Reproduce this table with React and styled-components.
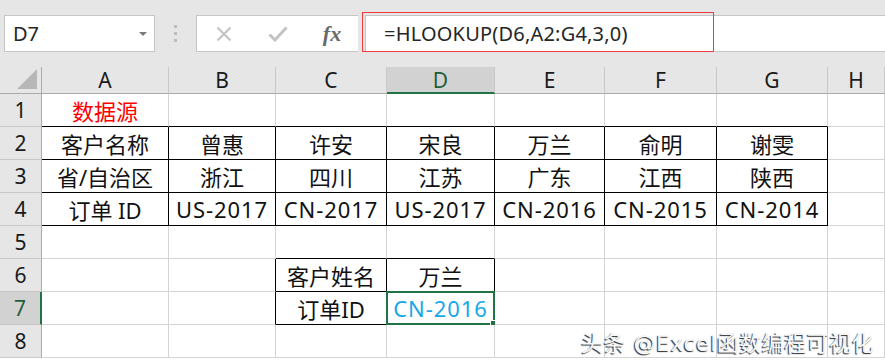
import React from "react";
import styled, { createGlobalStyle } from "styled-components";

const Global = createGlobalStyle`
  html, body { margin: 0; padding: 0; background: #ffffff; overflow: hidden; }
  body { font-family: "Noto Sans", "Noto Sans CJK SC", sans-serif; }
`;

const Page = styled.div`
  position: relative;
  width: 885px;
  height: 362px;
  overflow: hidden;
  background: #ffffff;
`;

const Toolbar = styled.div`
  position: relative;
  display: flex;
  align-items: flex-start;
  height: 67px;
  box-sizing: border-box;
  padding: 15px 0 0 4px;
  background: #e6e6e6;
`;

const NameBox = styled.div`
  display: flex;
  align-items: center;
  justify-content: space-between;
  width: 151px;
  height: 37px;
  box-sizing: border-box;
  padding: 0 7px 0 8px;
  background: #ffffff;
  border: 1px solid #c6c6c6;
  font-size: 20px;
  color: #262626;
`;

const Caret = styled.span`
  width: 0;
  height: 0;
  border-left: 4px solid transparent;
  border-right: 4px solid transparent;
  border-top: 4px solid #7a7a7a;
`;

const Grip = styled.svg`
  margin: 10px 0 0 18px;
  flex: none;
`;

const FxBox = styled.div`
  display: flex;
  align-items: center;
  width: 162px;
  height: 37px;
  box-sizing: border-box;
  margin-left: 18px;
  background: #ffffff;
  border: 1px solid #c6c6c6;
  border-right: none;
`;

const IconSlot = styled.span`
  display: flex;
  align-items: center;
  justify-content: center;
  width: ${(p) => p.$w}px;
  margin-left: ${(p) => p.$ml}px;
`;

const FxText = styled.span`
  font-family: "Liberation Serif", "DejaVu Serif", serif;
  font-style: italic;
  font-weight: bold;
  font-size: 22px;
  color: #6a6a6a;
  line-height: 1;
`;

const FormulaBar = styled.div`
  flex: 1;
  height: 37px;
  box-sizing: border-box;
  margin-left: 7px;
  padding-left: 18px;
  display: flex;
  align-items: center;
  background: #ffffff;
  border: 1px solid #c6c6c6;
  border-right: none;
  font-size: 20px;
  letter-spacing: 0.2px;
  color: #262626;
  white-space: nowrap;
`;

const RedMark = styled.div`
  position: absolute;
  left: 362px;
  top: 12px;
  width: 352px;
  height: 40px;
  box-sizing: border-box;
  border: 1px solid #f23a3a;
  pointer-events: none;
`;

const Sheet = styled.div`
  display: grid;
  grid-template-columns: 42px 127px 107px 111px 108px 110px 112px 111px 1fr;
  grid-template-rows: 27px repeat(8, 33px);
`;

const Corner = styled.div`
  background: #e6e6e6;
  border-right: 1px solid #ababab;
  border-bottom: 1px solid #ababab;
  box-sizing: border-box;
  display: flex;
  align-items: flex-end;
  justify-content: flex-end;
  padding: 0 3px 3px 0;
`;

const ColHead = styled.div`
  box-sizing: border-box;
  display: flex;
  align-items: center;
  justify-content: center;
  background: ${(p) => (p.$sel ? "#d2d2d2" : "#e6e6e6")};
  border-right: 1px solid #c8c8c8;
  border-bottom: ${(p) => (p.$sel ? "2px solid #217346" : "1px solid #ababab")};
  font-size: 21px;
  color: ${(p) => (p.$sel ? "#1f5f3a" : "#1a1a1a")};
  padding-top: ${(p) => (p.$sel ? "1px" : "0")};
`;

const RowHead = styled.div`
  box-sizing: border-box;
  display: flex;
  align-items: center;
  justify-content: center;
  background: ${(p) => (p.$sel ? "#d2d2d2" : "#e6e6e6")};
  border-right: ${(p) => (p.$sel ? "2px solid #217346" : "1px solid #ababab")};
  border-bottom: 1px solid #c8c8c8;
  font-size: 21px;
  color: ${(p) => (p.$sel ? "#1f5f3a" : "#1a1a1a")};
`;

const Cell = styled.div`
  position: relative;
  box-sizing: border-box;
  display: flex;
  align-items: center;
  justify-content: center;
  white-space: nowrap;
  border-right: 1px solid ${(p) => p.$right};
  border-bottom: 1px solid ${(p) => p.$bottom};
  font-size: 22px;
  letter-spacing: ${(p) => (p.$latin ? "0.9px" : "0")};
  color: ${(p) => p.$color || "#111111"};
  background: #ffffff;
`;

const ActiveFrame = styled.div`
  position: absolute;
  left: -1px;
  top: -1px;
  right: -1px;
  bottom: -1px;
  border: 2px solid #217346;
  pointer-events: none;
  &::after {
    content: "";
    position: absolute;
    right: -5px;
    bottom: -5px;
    width: 6px;
    height: 6px;
    background: #217346;
    border: 1px solid #ffffff;
  }
`;

const Watermark = styled.div`
  position: absolute;
  left: 581px;
  top: 325px;
  font-family: "DejaVu Sans", "Noto Sans CJK SC", sans-serif;
  font-size: 22px;
  color: #f8f8f8;
  letter-spacing: 0.5px;
  white-space: nowrap;
  text-shadow: -1px 1px 1px rgba(0, 0, 0, 0.85);
`;

const COLS = ["A", "B", "C", "D", "E", "F", "G", "H"];

const DATA = {
  "1-0": { t: "数据源", color: "#ff0000" },
  "2-0": { t: "客户名称" },
  "2-1": { t: "曾惠" },
  "2-2": { t: "许安" },
  "2-3": { t: "宋良" },
  "2-4": { t: "万兰" },
  "2-5": { t: "俞明" },
  "2-6": { t: "谢雯" },
  "3-0": { t: "省/自治区" },
  "3-1": { t: "浙江" },
  "3-2": { t: "四川" },
  "3-3": { t: "江苏" },
  "3-4": { t: "广东" },
  "3-5": { t: "江西" },
  "3-6": { t: "陕西" },
  "4-0": { t: "订单 ID" },
  "4-1": { t: "US-2017", latin: true },
  "4-2": { t: "CN-2017", latin: true },
  "4-3": { t: "US-2017", latin: true },
  "4-4": { t: "CN-2016", latin: true },
  "4-5": { t: "CN-2015", latin: true },
  "4-6": { t: "CN-2014", latin: true },
  "6-2": { t: "客户姓名" },
  "6-3": { t: "万兰" },
  "7-2": { t: "订单ID" },
  "7-3": { t: "CN-2016", color: "#19a8e6", latin: true },
};

const inTable = (r, c) =>
  (r >= 2 && r <= 4 && c >= 0 && c <= 6) || (r >= 6 && r <= 7 && c >= 2 && c <= 3);

const GRID = "#d4d4d4";
const BLACK = "#000000";

export default function App() {
  const rows = [1, 2, 3, 4, 5, 6, 7, 8];
  return (
    <Page>
      <Global />
      <Toolbar>
        <NameBox>
          <span>D7</span>
          <Caret />
        </NameBox>
        <Grip width="5" height="17" viewBox="0 0 5 17">
          <rect x="1" y="0" width="3" height="3" fill="#bdbdbd" />
          <rect x="1" y="7" width="3" height="3" fill="#bdbdbd" />
          <rect x="1" y="14" width="3" height="3" fill="#bdbdbd" />
        </Grip>
        <FxBox>
          <IconSlot $w={16} $ml={19}>
            <svg width="16" height="16" viewBox="0 0 16 16">
              <path d="M1.5 1.5 L14.5 14.5 M14.5 1.5 L1.5 14.5" stroke="#c4c4c4" strokeWidth="2.2" fill="none" />
            </svg>
          </IconSlot>
          <IconSlot $w={20} $ml={36}>
            <svg width="20" height="16" viewBox="0 0 20 16">
              <path d="M1.5 8.5 L7 14 L18.5 1.5" stroke="#c4c4c4" strokeWidth="3" fill="none" />
            </svg>
          </IconSlot>
          <IconSlot $w={22} $ml={33}>
            <FxText>fx</FxText>
          </IconSlot>
        </FxBox>
        <FormulaBar>=HLOOKUP(D6,A2:G4,3,0)</FormulaBar>
        <RedMark />
      </Toolbar>
      <Sheet>
        <Corner>
          <svg width="21" height="21" viewBox="0 0 21 21">
            <polygon points="20,0 20,20 0,20" fill="#b7b7b7" />
          </svg>
        </Corner>
        {COLS.map((c) => (
          <ColHead key={c} $sel={c === "D"}>
            {c}
          </ColHead>
        ))}
        {rows.map((r) => (
          <React.Fragment key={r}>
            <RowHead $sel={r === 7}>{r}</RowHead>
            {COLS.map((_, c) => {
              const d = DATA[`${r}-${c}`];
              const right = inTable(r, c) || inTable(r, c + 1) ? BLACK : GRID;
              const bottom = inTable(r, c) || inTable(r + 1, c) ? BLACK : GRID;
              return (
                <Cell
                  key={c}
                  $right={right}
                  $bottom={bottom}
                  $color={d && d.color}
                  $latin={d && d.latin}
                >
                  {d ? d.t : ""}
                  {r === 7 && c === 3 ? <ActiveFrame /> : null}
                </Cell>
              );
            })}
          </React.Fragment>
        ))}
      </Sheet>
      <Watermark>头条 @Excel函数编程可视化</Watermark>
    </Page>
  );
}
